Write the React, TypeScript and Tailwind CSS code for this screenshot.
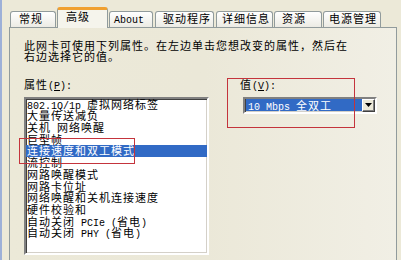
import React from 'react';

const cjk = "font-['Noto_Sans_CJK_SC','Noto_Sans_CJK_JP',sans-serif] text-[11px] tracking-[1px] text-black";

// ascii runs use a narrow mono font, like the half-width glyphs of the original font
const M = ({ t }: { t: string }) => (
  <>
    {t.split(/([\x20-\x7e]+)/).map((s, i) =>
      /^[\x20-\x7e]+$/.test(s) ? (
        <span key={i} className="font-['Liberation_Mono',monospace] text-[10px] tracking-normal">
          {s}
        </span>
      ) : (
        s
      )
    )}
  </>
);

const tabs = [
  { label: '常规', ml: 'ml-[10px]', w: 'w-[46px]', pl: 'pl-[8px]' },
  { label: '高级', ml: 'ml-[1px]', w: 'w-[51px]', pl: 'pl-[8px]', active: true },
  { label: 'About', ml: 'ml-[1px]', w: 'w-[44px]', pl: 'pl-[4px]' },
  { label: '驱动程序', ml: 'ml-[2px]', w: 'w-[59px]', pl: 'pl-[7px]' },
  { label: '详细信息', ml: 'ml-[2px]', w: 'w-[57px]', pl: 'pl-[5px]' },
  { label: '资源', ml: 'ml-[1px]', w: 'w-[48px]', pl: 'pl-[7px]' },
  { label: '电源管理', ml: 'ml-[1px]', w: 'w-[58px]', pl: 'pl-[5px]' },
];

const props = [
  '802.1Q/1p 虚拟网络标签',
  '大量传送减负',
  '关机 网络唤醒',
  '巨型帧',
  '连接速度和双工模式',
  '流控制',
  '网路唤醒模式',
  '网路卡位址',
  '网络唤醒和关机连接速度',
  '硬件校验和',
  '自动关闭 PCIe (省电)',
  '自动关闭 PHY (省电)',
];

const sunken =
  'border-2 border-t-[#808080] border-l-[#808080] border-r-white border-b-white shadow-[inset_1px_1px_0_#404040,inset_-1px_-1px_0_#d4d0c8]';

export default function App() {
  return (
    <div className={`relative w-[401px] h-[260px] overflow-hidden bg-[#ece9d8] ${cjk}`}>
      <div className="flex h-full">
        <div className="w-[2px] h-full bg-[#9db0d8]" />
        <div className="flex-1 flex flex-col">
          {/* tab strip */}
          <div className="flex items-end h-[27px] -ml-[2px]">
            {tabs.map((t) =>
              t.active ? (
                <div
                  key={t.label}
                  className={`${t.ml} ${t.w} ${t.pl} relative z-10 h-[21px] -mb-px rounded-t-[3px] border border-b-0 border-[#919b9c] border-t-[3px] border-t-[#f0a030] bg-[#f5f4ec] leading-[11.7px] pt-px`}
                >
                  {t.label}
                </div>
              ) : (
                <div
                  key={t.label}
                  className={`${t.ml} ${t.w} ${t.pl} h-[16px] rounded-t-[3px] border border-b-0 border-[#919b9c] bg-gradient-to-b from-white to-[#ecebe4] leading-[11.7px] pt-[1px]`}
                >
                  <M t={t.label} />
                </div>
              )
            )}
          </div>

          {/* panel */}
          <div className="ml-[7px] w-[388px] flex-1 border border-[#919b9c] border-b-0 bg-gradient-to-r from-[#ecE9d8] via-[#ebe8d8] to-[#f1efe5] pl-[14px] pt-[12px]">
            <div className="leading-[11px] whitespace-nowrap">
              <div>此网卡可使用下列属性。在左边单击您想改变的属性，然后在</div>
              <div>右边选择它的值。</div>
            </div>

            <div className="flex mt-[17px]">
              <div className="w-[185px] flex flex-col">
                <div className="leading-[11.7px]">
                  属性<M t="(" />
                  <span className="underline font-['Liberation_Mono',monospace] text-[10px] tracking-normal">P</span>
                  <M t="):" />
                </div>
                <div className={`mt-[4px] h-[158px] bg-white ${sunken} flex flex-col whitespace-nowrap`}>
                  {props.map((p, i) => (
                    <div
                      key={p}
                      className={`h-[11.7px] leading-[11.7px] pl-[1px] ${
                        i === 4 ? 'bg-[#316ac5] text-white' : ''
                      }`}
                    >
                      <M t={p} />
                    </div>
                  ))}
                </div>
              </div>

              <div className="ml-[31px] flex flex-col">
                <div className="leading-[11.7px]">
                  值<M t="(" />
                  <span className="underline font-['Liberation_Mono',monospace] text-[10px] tracking-normal">V</span>
                  <M t="):" />
                </div>
                <div className={`mt-[4px] ml-[3px] w-[134px] h-[17px] bg-white ${sunken} flex items-center`}>
                  <div className="ml-[1px] flex-1 h-[12px] self-start bg-[#316ac5] text-white leading-[12px] pl-[2px] whitespace-nowrap">
                    <M t="10 Mbps 全双工" />
                  </div>
                  <div className="w-[13px] h-full bg-[#ece9d8] border border-t-white border-l-white border-r-[#404040] border-b-[#404040] shadow-[inset_-1px_-1px_0_#808080] flex items-center justify-center">
                    <svg width="7" height="4" viewBox="0 0 7 4">
                      <path d="M0 0h7L3.5 4z" fill="#000" />
                    </svg>
                  </div>
                </div>
              </div>
            </div>
          </div>
        </div>
      </div>

      {/* red annotation boxes */}
      <div className="absolute left-[19px] top-[138px] w-[116px] h-[26px] border border-[#c4343c]" />
      <div className="absolute left-[227px] top-[78px] w-[128px] h-[50px] border border-[#c4343c]" />
    </div>
  );
}
